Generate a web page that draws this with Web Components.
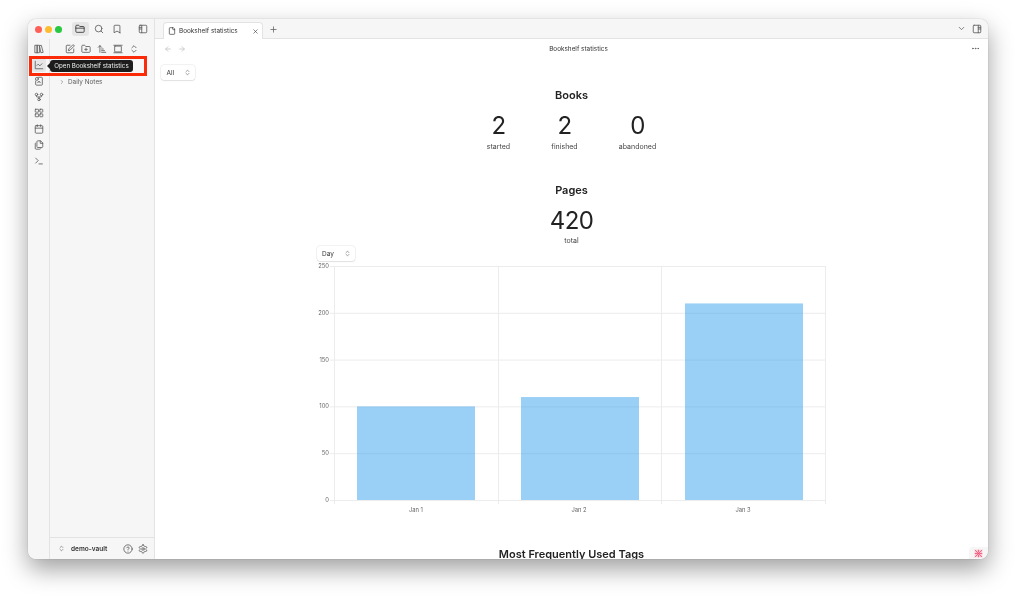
<!DOCTYPE html>
<html lang="en">
<head>
<meta charset="utf-8">
<title>Bookshelf statistics</title>
<style>
  html, body { margin: 0; height: 100%; background: #fff; overflow: hidden; }
  body { font-family: Inter, "Liberation Sans", sans-serif; padding: 19px 28px 37px; box-sizing: border-box; }
</style>
</head>
<body>
<app-window>
  <ribbon-bar slot="ribbon"></ribbon-bar>
  <nav-sidebar slot="sidebar"></nav-sidebar>
  <tab-header slot="tabs"></tab-header>
  <view-header slot="view"></view-header>
  <stats-view slot="content"></stats-view>
</app-window>

<script>
const ICONS = {
  folder: '<path d="M20 20a2 2 0 0 0 2-2V8a2 2 0 0 0-2-2h-7.9a2 2 0 0 1-1.69-.9L9.6 3.9A2 2 0 0 0 7.93 3H4a2 2 0 0 0-2 2v13a2 2 0 0 0 2 2Z"/><path d="M2 10h20"/>',
  search: '<circle cx="11" cy="11" r="8"/><path d="m21 21-4.3-4.3"/>',
  bookmark: '<path d="m19 21-7-4-7 4V5a2 2 0 0 1 2-2h10a2 2 0 0 1 2 2v16z"/>',
  sidebarLeft: '<rect x="3" y="3" width="18" height="18" rx="2"/><path d="M9 3v18"/><path d="M3 8h6M3 12h6"/>',
  sidebarRight: '<rect x="3" y="3" width="18" height="18" rx="2"/><path d="M15 3v18"/><path d="M15 8h6M15 12h6"/>',
  library: '<path d="M3 3h5v18H3z"/><path d="M8 3h5v18H8z"/><path d="m14 4 3.5-1 4.5 17-4.5 1z"/>',
  chart: '<path d="M3 3v18h18"/><path d="m19 9-5 5-4-4-3 3"/>',
  dice: '<path d="M10 3h8a2 2 0 0 1 2 2v15a2 2 0 0 1-2 2H6a2 2 0 0 1-2-2v-8"/><circle cx="7" cy="7" r="3.5"/><path d="M9 16a3 3 0 0 1 6 0"/>',
  fork: '<circle cx="12" cy="18" r="3"/><circle cx="6" cy="6" r="3"/><circle cx="18" cy="6" r="3"/><path d="M18 9v2c0 .6-.4 1-1 1H7c-.6 0-1-.4-1-1V9"/><path d="M12 12v3"/>',
  canvas: '<rect x="3" y="3" width="8" height="7" rx="1"/><rect x="14" y="3" width="7" height="7" rx="1"/><rect x="3" y="14" width="8" height="7" rx="1"/><rect x="14" y="14" width="7" height="7" rx="1"/>',
  calendar: '<path d="M8 2v4"/><path d="M16 2v4"/><rect x="3" y="4" width="18" height="18" rx="2"/><path d="M3 10h18"/>',
  copy: '<path d="M15 2H9a2 2 0 0 0-2 2v12a2 2 0 0 0 2 2h10a2 2 0 0 0 2-2V8z"/><path d="M15 2v6h6"/><path d="M4 7a2 2 0 0 0-1 2v11a2 2 0 0 0 2 2h9a2 2 0 0 0 2-1"/>',
  terminal: '<path d="m4 17 6-6-6-6"/><path d="M12 19h8"/>',
  edit: '<path d="M12 3H5a2 2 0 0 0-2 2v14a2 2 0 0 0 2 2h14a2 2 0 0 0 2-2v-7"/><path d="M18.4 2.6a2.1 2.1 0 0 1 3 3L12 15l-4 1 1-4z"/>',
  folderPlus: '<path d="M12 10v6"/><path d="M9 13h6"/><path d="M20 20a2 2 0 0 0 2-2V8a2 2 0 0 0-2-2h-7.9a2 2 0 0 1-1.69-.9L9.6 3.9A2 2 0 0 0 7.93 3H4a2 2 0 0 0-2 2v13a2 2 0 0 0 2 2Z"/>',
  sort: '<path d="m3 8 4-4 4 4"/><path d="M7 4v16"/><path d="M11 12h4"/><path d="M11 16h7"/><path d="M11 20h10"/>',
  reveal: '<rect x="4" y="5" width="16" height="14" rx="1"/><path d="M2 3h20"/><path d="M2 21h20"/>',
  updown: '<path d="m7 15 5 5 5-5"/><path d="m7 9 5-5 5 5"/>',
  chevronRight: '<path d="m9 18 6-6-6-6"/>',
  chevronDown: '<path d="m6 9 6 6 6-6"/>',
  file: '<path d="M15 2H6a2 2 0 0 0-2 2v16a2 2 0 0 0 2 2h12a2 2 0 0 0 2-2V7z"/><path d="M14 2v4a2 2 0 0 0 2 2h4"/>',
  close: '<path d="M18 6 6 18"/><path d="m6 6 12 12"/>',
  plus: '<path d="M5 12h14"/><path d="M12 5v14"/>',
  left: '<path d="m12 19-7-7 7-7"/><path d="M19 12H5"/>',
  right: '<path d="M5 12h14"/><path d="m12 5 7 7-7 7"/>',
  more: '<circle cx="12" cy="12" r="1" fill="currentColor"/><circle cx="19" cy="12" r="1" fill="currentColor"/><circle cx="5" cy="12" r="1" fill="currentColor"/>',
  help: '<circle cx="12" cy="12" r="10"/><path d="M9.1 9a3 3 0 0 1 5.8 1c0 2-3 3-3 3"/><path d="M12 17h.01"/>',
  gear: '<path d="M12.2 2h-.4a2 2 0 0 0-2 2v.2a2 2 0 0 1-1 1.7l-.4.3a2 2 0 0 1-2 0l-.2-.1a2 2 0 0 0-2.7.7l-.2.4a2 2 0 0 0 .7 2.7l.2.1a2 2 0 0 1 1 1.7v.5a2 2 0 0 1-1 1.8l-.2.1a2 2 0 0 0-.7 2.7l.2.4a2 2 0 0 0 2.7.7l.2-.1a2 2 0 0 1 2 0l.4.3a2 2 0 0 1 1 1.7v.2a2 2 0 0 0 2 2h.4a2 2 0 0 0 2-2v-.2a2 2 0 0 1 1-1.7l.4-.3a2 2 0 0 1 2 0l.2.1a2 2 0 0 0 2.7-.7l.2-.4a2 2 0 0 0-.7-2.7l-.2-.1a2 2 0 0 1-1-1.8v-.5a2 2 0 0 1 1-1.7l.2-.1a2 2 0 0 0 .7-2.7l-.2-.4a2 2 0 0 0-2.7-.7l-.2.1a2 2 0 0 1-2 0l-.4-.3a2 2 0 0 1-1-1.7V4a2 2 0 0 0-2-2z"/><circle cx="12" cy="12" r="3"/>',
  syncOff: '<rect x="2" y="2" width="20" height="20" fill="#fbc6d2" stroke="none"/><path d="M3 3 21 21M21 3 3 21M3 12h6M15 12h6M12 3v5M12 16v5"/>'
};

class UiIcon extends HTMLElement {
  connectedCallback() {
    const size = this.getAttribute('size') || 10;
    const name = this.getAttribute('name');
    if (!this.shadowRoot) this.attachShadow({ mode: 'open' });
    this.shadowRoot.innerHTML = `
      <style>
        :host { display: inline-flex; align-items: center; justify-content: center; color: inherit; flex: none; }
        svg { display: block; fill: none; stroke: currentColor; stroke-width: 2; stroke-linecap: round; stroke-linejoin: round; }
      </style>
      <svg width="${size}" height="${size}" viewBox="0 0 24 24">${ICONS[name] || ''}</svg>`;
  }
}
customElements.define('ui-icon', UiIcon);

class AppWindow extends HTMLElement {
  constructor() {
    super();
    this.attachShadow({ mode: 'open' });
    this.shadowRoot.innerHTML = `
      <style>
        :host {
          display: grid; position: relative; height: 100%; box-sizing: border-box;
          grid-template-columns: 22px 105px 1fr; grid-template-rows: 20px 1fr;
          border-radius: 8px; background: #fff;
          box-shadow: 0 0 1px rgba(0,0,0,.45), 0 10px 24px rgba(0,0,0,.38);
          font-family: Inter, "Liberation Sans", sans-serif; color: #222;
          will-change: transform;
        }
        .lights {
          grid-column: 1 / 3; grid-row: 1; background: #f6f6f6; border-radius: 8px 0 0 0;
          display: flex; align-items: center; padding: 0 0 0 7px; box-sizing: border-box; border-right: 1px solid #e3e3e3;
        }
        .dot { width: 7px; height: 7px; border-radius: 50%; margin-right: 3.2px; flex: none; }
        .tools { display: flex; align-items: center; margin-left: 6.4px; color: #5c5c5c; gap: 2px; }
        .tool { width: 16px; height: 14px; border-radius: 3px; display: flex; align-items: center; justify-content: center; }
        .tool.on { background: #e6e6e6; color: #333; width: 17px; }
        .tabs { grid-column: 3; grid-row: 1; min-width: 0; }
        .ribbon { grid-column: 1; grid-row: 2; min-height: 0; background: #f6f6f6; border-right: 1px solid #e3e3e3; border-radius: 0 0 0 8px; }
        .side { grid-column: 2; grid-row: 2; min-height: 0; }
        .main { grid-column: 3; grid-row: 2; min-height: 0; min-width: 0; display: flex; flex-direction: column; overflow: hidden; border-radius: 0 0 8px 0; position: relative; }
        .tip {
          position: absolute; left: 22px; top: 41px; height: 12px; width: 83px; box-sizing: border-box;
          background: #1c1c1c; color: #eee; border-radius: 3px; font-size: 6.2px; line-height: 12px; text-align: center; white-space: nowrap;
        }
        .tip::before { content: ""; position: absolute; left: -3px; top: 3px; border: 3px solid transparent; border-left: 0; border-right-color: #1c1c1c; }
        .mark { position: absolute; left: 1px; top: 37px; width: 118px; height: 20px; box-sizing: border-box; border: 3px solid #fb2a09; }
        .status {
          position: absolute; right: 0; bottom: 0; width: 19px; height: 12px; background: #f6f6f6;
          border-radius: 4px 0 8px 0; display: flex; align-items: center; justify-content: center; color: #f0476b;
        }
      </style>
      <div class="lights">
        <span class="dot" style="background:#ff5f57"></span>
        <span class="dot" style="background:#febc2e"></span>
        <span class="dot" style="background:#28c840"></span>
        <div class="tools">
          <span class="tool on"><ui-icon name="folder" size="10"></ui-icon></span>
          <span class="tool"><ui-icon name="search" size="10"></ui-icon></span>
          <span class="tool"><ui-icon name="bookmark" size="10"></ui-icon></span>
          <span class="tool" style="margin-left:8px"><ui-icon name="sidebarLeft" size="10"></ui-icon></span>
        </div>
      </div>
      <div class="tabs"><slot name="tabs"></slot></div>
      <div class="ribbon"><slot name="ribbon"></slot></div>
      <div class="side"><slot name="sidebar"></slot></div>
      <div class="main"><slot name="view"></slot><slot name="content"></slot></div>
      <div class="mark"></div>
      <div class="tip">Open Bookshelf statistics</div>
      <div class="status"><ui-icon name="syncOff" size="9"></ui-icon></div>`;
  }
}
customElements.define('app-window', AppWindow);

class RibbonBar extends HTMLElement {
  constructor() {
    super();
    this.attachShadow({ mode: 'open' });
    const names = ['library', 'chart', 'dice', 'fork', 'canvas', 'calendar', 'copy', 'terminal'];
    this.shadowRoot.innerHTML = `
      <style>
        :host { display: flex; flex-direction: column; align-items: center; gap: 2px; padding-top: 3px; color: #5c5c5c; }
        span { width: 14px; height: 14px; display: flex; align-items: center; justify-content: center; border-radius: 3px; }
        .on { background: #e6e6e6; }
      </style>
      ${names.map(n => `<span class="${n === 'chart' ? 'on' : ''}"><ui-icon name="${n}" size="10"></ui-icon></span>`).join('')}`;
  }
}
customElements.define('ribbon-bar', RibbonBar);

class NavSidebar extends HTMLElement {
  constructor() {
    super();
    this.attachShadow({ mode: 'open' });
    const tools = ['edit', 'folderPlus', 'sort', 'reveal', 'updown'];
    this.shadowRoot.innerHTML = `
      <style>
        :host { display: flex; flex-direction: column; height: 100%; box-sizing: border-box; background: #f6f6f6; border-right: 1px solid #e3e3e3; color: #5c5c5c; font-size: 6.4px; }
        .tools { display: flex; justify-content: center; align-items: center; gap: 6px; height: 20px; box-sizing: border-box; margin-right: 1px; }
        .tree { flex: 1; padding: 18px 0 0 9px; display: flex; align-items: flex-start; }
        .row { display: flex; align-items: center; gap: 3px; line-height: 10px; }
        .foot { height: 22px; border-top: 1px solid #e3e3e3; display: flex; align-items: center; padding: 0 6px 0 8px; box-sizing: border-box; }
        .vault { font-weight: 600; color: #333; margin-left: 6px; flex: 1; font-size: 6.5px; }
        .foot ui-icon + ui-icon { margin-left: 5px; }
      </style>
      <div class="tools">${tools.map(n => `<ui-icon name="${n}" size="10"></ui-icon>`).join('')}</div>
      <div class="tree"><div class="row"><ui-icon name="chevronRight" size="6"></ui-icon><span>Daily Notes</span></div></div>
      <div class="foot">
        <ui-icon name="updown" size="7"></ui-icon>
        <span class="vault">demo-vault</span>
        <ui-icon name="help" size="10"></ui-icon>
        <ui-icon name="gear" size="10"></ui-icon>
      </div>`;
  }
}
customElements.define('nav-sidebar', NavSidebar);

class TabHeader extends HTMLElement {
  constructor() {
    super();
    this.attachShadow({ mode: 'open' });
    this.shadowRoot.innerHTML = `
      <style>
        :host { display: flex; align-items: flex-end; height: 20px; box-sizing: border-box; background: #f6f6f6; border-bottom: 1px solid #e3e3e3; padding-left: 8px; border-radius: 0 8px 0 0; color: #5c5c5c; font-size: 6.4px; position: relative; }
        .tab { width: 100px; height: 17px; margin-bottom: -1px; background: #fff; border: 1px solid #e3e3e3; border-bottom: 0; border-radius: 4px 4px 0 0; display: flex; align-items: center; box-sizing: border-box; padding: 0 3px 0 4px; color: #333; }
        .tab span { margin-left: 3px; flex: 1; white-space: nowrap; }
        .plus { margin: 0 0 2px 6px; height: 14px; display: flex; align-items: center; }
        .right { margin-left: auto; display: flex; align-items: center; gap: 6px; height: 19px; padding-right: 6px; }
      </style>
      <div class="tab"><ui-icon name="file" size="8"></ui-icon><span>Bookshelf statistics</span><ui-icon name="close" size="7"></ui-icon></div>
      <div class="plus"><ui-icon name="plus" size="9"></ui-icon></div>
      <div class="right"><ui-icon name="chevronDown" size="9"></ui-icon><ui-icon name="sidebarRight" size="10"></ui-icon></div>`;
  }
}
customElements.define('tab-header', TabHeader);

class ViewHeader extends HTMLElement {
  constructor() {
    super();
    this.attachShadow({ mode: 'open' });
    this.shadowRoot.innerHTML = `
      <style>
        :host { display: flex; align-items: center; height: 19px; flex: none; padding: 0 8px 0 9px; color: #b8b8b8; font-size: 6.4px; }
        .nav { display: flex; gap: 6px; width: 60px; }
        .title { flex: 1; text-align: center; color: #333; }
        .act { width: 47px; display: flex; justify-content: flex-end; color: #5c5c5c; }
      </style>
      <div class="nav"><ui-icon name="left" size="8"></ui-icon><ui-icon name="right" size="8"></ui-icon></div>
      <div class="title">Bookshelf statistics</div>
      <div class="act"><ui-icon name="more" size="9"></ui-icon></div>`;
  }
}
customElements.define('view-header', ViewHeader);

class SelectBox extends HTMLElement {
  constructor() {
    super();
    this.attachShadow({ mode: 'open' });
    this.shadowRoot.innerHTML = `
      <style>
        :host { display: inline-flex; align-items: center; justify-content: space-between; box-sizing: border-box; height: 15px; padding: 0 4px 0 5.5px; background: #fff; border-radius: 3px; font-size: 6.5px; color: #333; box-shadow: 0 0 0 .5px rgba(0,0,0,.1), 0 1px 1.5px rgba(0,0,0,.08); }
        ui-icon { color: #5c5c5c; }
      </style>
      <slot></slot><ui-icon name="updown" size="7"></ui-icon>`;
  }
}
customElements.define('select-box', SelectBox);

class StatItem extends HTMLElement {
  constructor() {
    super();
    this.attachShadow({ mode: 'open' });
    this.shadowRoot.innerHTML = `
      <style>
        :host { display: flex; flex-direction: column; align-items: center; width: 66px; }
        .num { font-size: 24px; line-height: 23px; color: #222; letter-spacing: -.6px; }
        .lab { font-size: 7px; line-height: 9px; color: #444; margin-top: var(--lab-gap, 5px); }
      </style>
      <div class="num"><slot name="num"></slot></div>
      <div class="lab"><slot name="label"></slot></div>`;
  }
}
customElements.define('stat-item', StatItem);

class BarChart extends HTMLElement {
  constructor() {
    super();
    this.attachShadow({ mode: 'open' });
    const ticks = [250, 200, 150, 100, 50, 0];
    const grid = '#ececec';
    const x0 = 17, x1 = 509, base = 234;
    const cols = [17, 181, 344, 508];
    const bars = [[40, 100], [204, 110], [368, 210]];
    const yFor = v => base - v * 0.936;
    this.shadowRoot.innerHTML = `
      <style>
        :host { display: block; width: 510px; height: 256px; }
        svg { display: block; overflow: visible; }
        text { font-family: Inter, "Liberation Sans", sans-serif; font-size: 5.8px; fill: #666; }
      </style>
      <svg width="510" height="256" viewBox="0 0 510 256">
        ${ticks.map(v => `<line x1="${x0 - 4}" x2="${x1}" y1="${yFor(v) + .5}" y2="${yFor(v) + .5}" stroke="${grid}"/>`).join('')}
        ${cols.map(x => `<line x1="${x + .5}" x2="${x + .5}" y1="0" y2="${base + 4}" stroke="${grid}"/>`).join('')}
        ${bars.map(([a, v]) => `<rect x="${a}" y="${yFor(v)}" width="118" height="${base - yFor(v)}" fill="rgba(54,162,235,.5)"/>`).join('')}
        ${ticks.map(v => `<text x="${x0 - 5}" y="${yFor(v) + 2}" text-anchor="end">${v}</text>`).join('')}
        <text x="99" y="246" text-anchor="middle">Jan 1</text>
        <text x="262" y="246" text-anchor="middle">Jan 2</text>
        <text x="426" y="246" text-anchor="middle">Jan 3</text>
      </svg>`;
  }
}
customElements.define('bar-chart', BarChart);

class StatsView extends HTMLElement {
  constructor() {
    super();
    this.attachShadow({ mode: 'open' });
    this.shadowRoot.innerHTML = `
      <style>
        :host { display: flex; flex-direction: column; flex: 1; min-height: 0; padding: 7px 6px 0; box-sizing: border-box; color: #222; }
        .top { width: 34px; align-self: flex-start; flex: none; }
        h2 { margin: 0; font-size: 11px; font-weight: 600; line-height: 14px; text-align: center; color: #222; white-space: nowrap; flex: none; }
        .row { display: flex; justify-content: center; flex: none; }
        .chart-wrap { width: 510px; margin: 0 auto; display: flex; flex-direction: column; align-items: flex-start; flex: none; }
        .day { width: 38px; margin-top: 1px; }
      </style>
      <select-box class="top">All</select-box>
      <h2 style="margin-top:8px">Books</h2>
      <div class="row" style="margin-top:12px">
        <stat-item style="width:66px"><span slot="num">2</span><span slot="label">started</span></stat-item>
        <stat-item style="width:66px"><span slot="num">2</span><span slot="label">finished</span></stat-item>
        <stat-item style="width:80px"><span slot="num">0</span><span slot="label">abandoned</span></stat-item>
      </div>
      <h2 style="margin-top:32px">Pages</h2>
      <div class="row" style="margin-top:12px"><stat-item style="--lab-gap:4px"><span slot="num">420</span><span slot="label">total</span></stat-item></div>
      <div class="chart-wrap">
        <select-box class="day">Day</select-box>
        <bar-chart style="margin-top:5px"></bar-chart>
      </div>
      <h2 style="margin-top:25px">Most Frequently Used Tags</h2>`;
  }
}
customElements.define('stats-view', StatsView);
</script>
</body>
</html>
